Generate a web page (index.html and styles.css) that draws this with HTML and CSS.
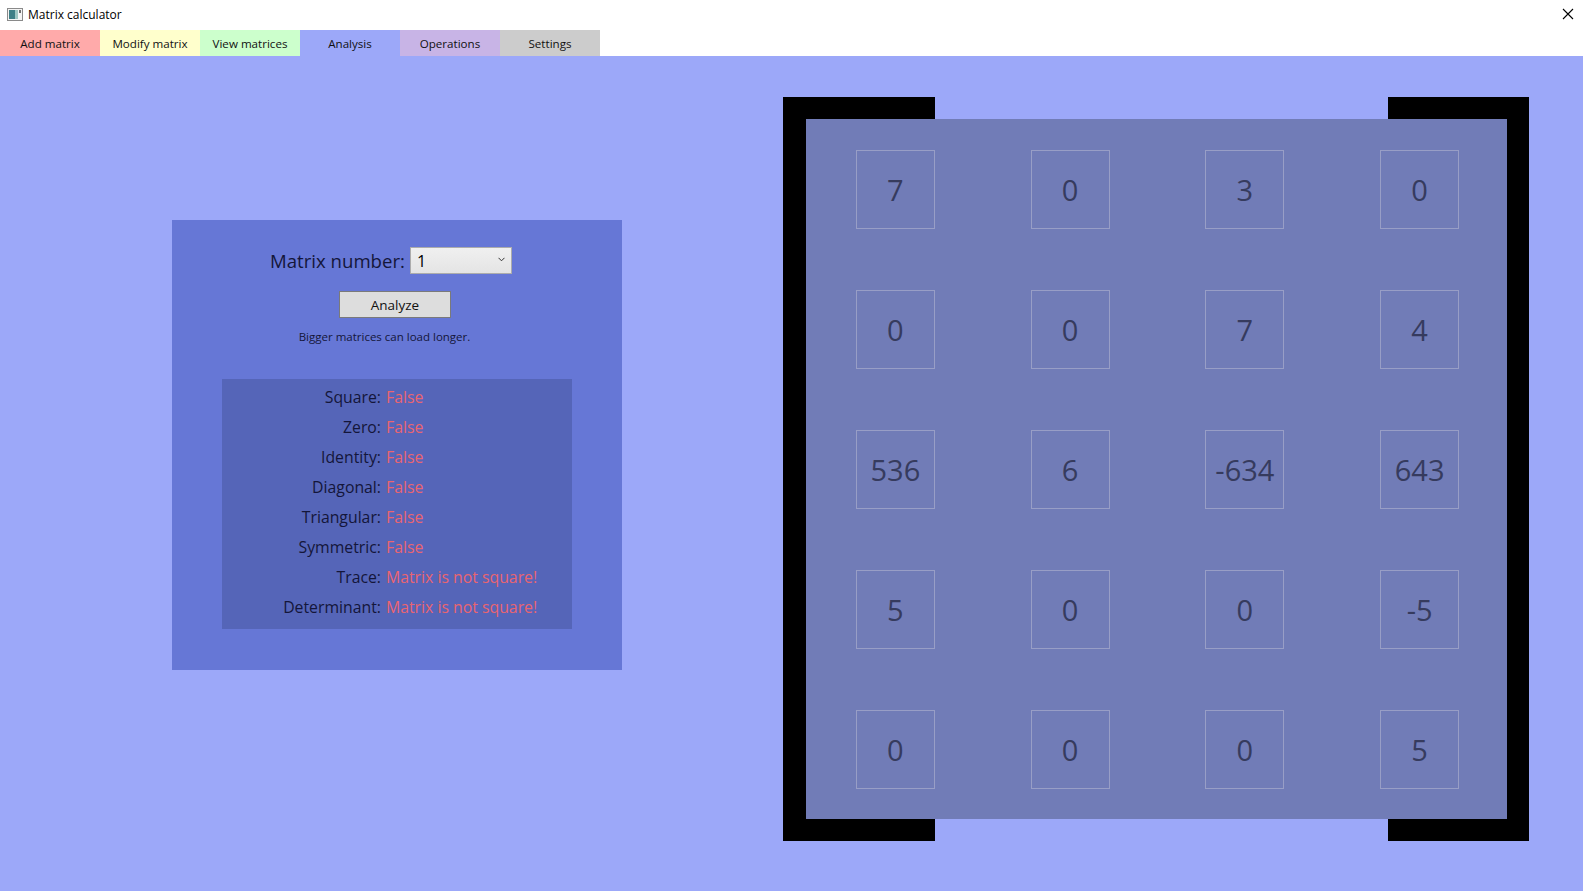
FILE: index.html
```html
<!DOCTYPE html>
<html lang="en">
<head>
<meta charset="utf-8">
<title>Matrix calculator</title>
<link rel="stylesheet" href="styles.css">
</head>
<body>
<div class="window">
  <header class="titlebar">
    <svg class="app-icon" width="16" height="13" viewBox="0 0 16 13">
      <rect x="0.5" y="0.5" width="15" height="12" fill="#f4f4f4" stroke="#8a8a8a"/>
      <rect x="2" y="2" width="6" height="9" fill="#3f7f86"/>
      <rect x="8" y="2" width="3" height="9" fill="#9fc6c2"/>
      <rect x="12" y="2" width="2" height="3" fill="#6e6e6e"/>
    </svg>
    <span class="title">Matrix calculator</span>
    <svg class="close" width="12" height="12" viewBox="0 0 12 12">
      <path d="M1 1 L11 11 M11 1 L1 11" stroke="#000" stroke-width="1.1" fill="none"/>
    </svg>
  </header>
  <nav class="tabs">
    <div class="tab tab-add">Add matrix</div>
    <div class="tab tab-modify">Modify matrix</div>
    <div class="tab tab-view">View matrices</div>
    <div class="tab tab-analysis">Analysis</div>
    <div class="tab tab-operations">Operations</div>
    <div class="tab tab-settings">Settings</div>
  </nav>
  <main class="content">
    <section class="panel">
      <div class="select-row">
        <span class="select-label">Matrix number:</span>
        <div class="combo">
          <span class="combo-value">1</span>
          <svg class="chevron" width="7" height="5" viewBox="0 0 7 5"><path d="M0.5 0.8 L3.5 3.8 L6.5 0.8" stroke="#333" stroke-width="1" fill="none"/></svg>
        </div>
      </div>
      <button class="analyze">Analyze</button>
      <p class="hint">Bigger matrices can load longer.</p>
      <div class="results">
        <div class="row"><span class="label">Square:</span><span class="value">False</span></div>
        <div class="row"><span class="label">Zero:</span><span class="value">False</span></div>
        <div class="row"><span class="label">Identity:</span><span class="value">False</span></div>
        <div class="row"><span class="label">Diagonal:</span><span class="value">False</span></div>
        <div class="row"><span class="label">Triangular:</span><span class="value">False</span></div>
        <div class="row"><span class="label">Symmetric:</span><span class="value">False</span></div>
        <div class="row"><span class="label">Trace:</span><span class="value">Matrix is not square!</span></div>
        <div class="row"><span class="label">Determinant:</span><span class="value">Matrix is not square!</span></div>
      </div>
    </section>
    <section class="matrix-frame">
      <div class="matrix">
        <div class="cell">7</div><div class="cell">0</div><div class="cell">3</div><div class="cell">0</div>
        <div class="cell">0</div><div class="cell">0</div><div class="cell">7</div><div class="cell">4</div>
        <div class="cell">536</div><div class="cell">6</div><div class="cell">-634</div><div class="cell">643</div>
        <div class="cell">5</div><div class="cell">0</div><div class="cell">0</div><div class="cell">-5</div>
        <div class="cell">0</div><div class="cell">0</div><div class="cell">0</div><div class="cell">5</div>
      </div>
    </section>
  </main>
</div>
</body>
</html>
```
FILE: styles.css
```css
*, *::before, *::after { box-sizing: border-box; }
html, body { margin: 0; padding: 0; }
body {
  width: 1583px;
  height: 891px;
  overflow: hidden;
  font-family: "Open Sans", "Noto Sans", "Liberation Sans", sans-serif;
  color: #14163a;
  background: #9ca8f9;
}
.window { display: flex; flex-direction: column; height: 891px; }

.titlebar {
  height: 30px;
  background: #ffffff;
  display: flex;
  align-items: center;
  padding-left: 7px;
}
.app-icon { display: block; margin-top: -1px; }
.title {
  font-size: 12px;
  color: #000;
  margin-left: 5px;
  margin-top: -1px;
}
.close { margin-left: auto; margin-right: 9px; margin-top: -2px; }

.tabs {
  height: 26px;
  display: flex;
  background: #ffffff;
}
.tab {
  width: 100px;
  height: 26px;
  font-size: 11.6px;
  display: flex;
  align-items: center;
  justify-content: center;
  color: #111;
}
.tab-add { background: #ffaaaa; }
.tab-modify { background: #ffffcc; }
.tab-view { background: #ccffcc; }
.tab-analysis { background: #9ca8f9; }
.tab-operations { background: #c8b4e6; }
.tab-settings { background: #cccccc; }

.content {
  flex: 1;
  display: flex;
  align-items: flex-start;
  background: #9ca8f9;
}

.panel {
  width: 450px;
  height: 450px;
  margin: 164px 0 0 172px;
  background: #6677d6;
  display: flex;
  flex-direction: column;
  align-items: center;
  padding-top: 27px;
}
.select-row {
  display: flex;
  align-items: center;
  height: 27px;
  margin-right: 12px;
}
.select-label {
  font-size: 18.6px;
  margin-right: 5px;
  color: #14163a;
}
.combo {
  width: 102px;
  height: 27px;
  border: 1px solid #acacac;
  background: linear-gradient(#f0f0f0, #e4e4e4);
  display: flex;
  align-items: center;
  padding: 0 6px 0 6px;
}
.combo-value { font-size: 16px; color: #000; }
.chevron { margin-left: auto; margin-top: -3px; }

.analyze {
  margin-top: 17px;
  margin-right: 4px;
  width: 112px;
  height: 27px;
  border: 1px solid #7a7a7a;
  background: #dddddd;
  font-family: inherit;
  font-size: 13.5px;
  color: #111;
  padding: 0;
}
.hint {
  margin: 11px 25px 0 0;
  font-size: 11.5px;
  line-height: 16px;
  color: #14163a;
}
.results {
  margin-top: 34px;
  width: 350px;
  height: 250px;
  background: #5565b8;
  padding-top: 3px;
}
.row {
  height: 30px;
  display: grid;
  grid-template-columns: 159px 1fr;
  align-items: center;
  font-size: 15.8px;
}
.label { text-align: right; color: #14163a; }
.value { padding-left: 5px; color: #ea6470; }

.matrix-frame {
  position: relative;
  margin: 41px 0 0 161px;
  padding: 22px 22px 22px 23px;
}
.matrix-frame::before,
.matrix-frame::after {
  content: "";
  position: absolute;
  top: 0;
  bottom: 0;
  border: 22px solid #000;
}
.matrix-frame::before {
  left: 0;
  width: 152px;
  border-left-width: 23px;
  border-right: 0;
}
.matrix-frame::after {
  right: 0;
  width: 141px;
  border-left: 0;
}
.matrix {
  position: relative;
  z-index: 1;
  width: 701px;
  height: 700px;
  padding-left: 2px;
  background: #717cb7;
  display: grid;
  grid-template-columns: repeat(4, 1fr);
  grid-template-rows: repeat(5, 1fr);
  place-items: center;
}
.cell {
  width: 79px;
  height: 79px;
  border: 1px solid #989ec6;
  display: flex;
  align-items: center;
  justify-content: center;
  font-size: 29px;
  color: #363b5e;
  padding-top: 1px;
}
```
